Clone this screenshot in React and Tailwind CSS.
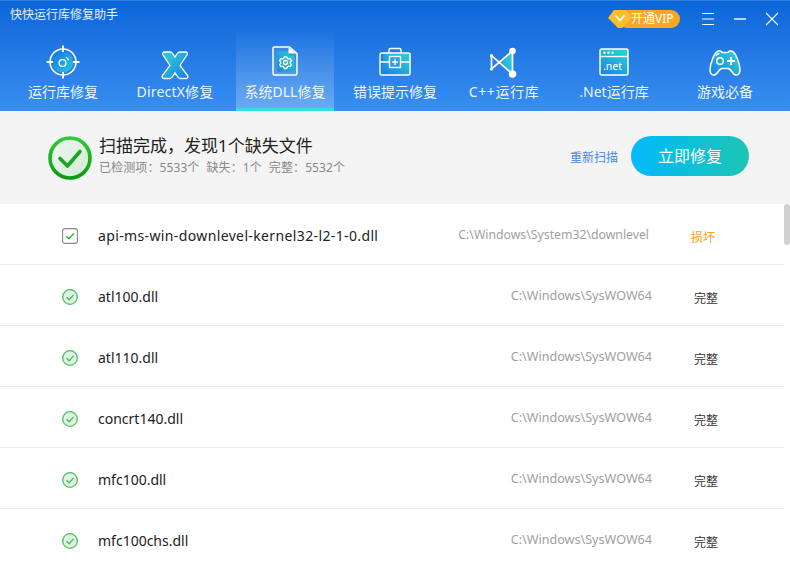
import React from "react";

const Grad = ({ id, from = "#2fd6d0", to = "#1a86e8", x1 = 0.8, y1 = 0, x2 = 0.2, y2 = 1 }) => (
  <linearGradient id={id} x1={x1} y1={y1} x2={x2} y2={y2}>
    <stop offset="0" stopColor={from} />
    <stop offset="1" stopColor={to} />
  </linearGradient>
);

const Target = () => (
  <svg width="36" height="36" viewBox="0 0 36 36" fill="none">
    <defs><Grad id="g1" from="#27cbd8" to="#1676e6" x1={1} y1={1} x2={0} y2={0} /></defs>
    <circle cx="18" cy="18" r="10.5" fill="url(#g1)" />
    <circle cx="18" cy="18" r="13" stroke="#fff" strokeWidth="1.6" />
    <path d="M18 1.5V8M18 28V34.5M1.5 18H8M28 18H34.5" stroke="#fff" strokeWidth="1.8" />
    <circle cx="17.5" cy="19" r="3.4" stroke="#fff" strokeWidth="1.3" />
    <path d="M21.5 13.5a5.5 5.5 0 0 1 2 2.4" stroke="#fff" strokeWidth="1.3" strokeLinecap="round" />
  </svg>
);

const XIcon = () => (
  <svg width="32" height="32" viewBox="0 0 32 32" fill="none">
    <defs><Grad id="g2" from="#2fd6d0" to="#1a7ee6" x1={0} y1={0} x2={1} y2={1} /></defs>
    <path d="M5.5 3h5.5c1.2 0 2 .5 2.7 1.5L16 8l2.3-3.5C19 3.500 19.800 3 21 3h5.500c1.800 0 2.500 1.700 1.500 3L21 16.500 28.500 26.500c1 1.400.2 3-1.500 3h-5.500c-1.200 0-2-.5-2.700-1.500L16 24l-2.800 4c-.7 1-1.500 1.500-2.700 1.500H5c-1.700 0-2.500-1.600-1.500-3L11 16.500 4 6c-1-1.300-.3-3 1.500-3z" fill="url(#g2)" stroke="#fff" strokeWidth="1.3" />
  </svg>
);

const FileIcon = () => (
  <svg width="28" height="30" viewBox="0 0 28 30" fill="none">
    <defs><Grad id="g3" from="#2bd3cd" to="#1a86e8" x1={1} y1={0} x2={0} y2={1} /></defs>
    <path d="M3.500 1H18.500L26 7.500V27.500A1.500 1.500 0 0 1 24.500 29H3.500A1.500 1.500 0 0 1 2 27.500V2.500A1.500 1.500 0 0 1 3.500 1Z" fill="#ffffff" fillOpacity="0.06" stroke="#fff" strokeWidth="1.5" strokeLinejoin="round" />
    <path d="M6 5.500H18V9.500H23V25.500H6Z" fill="url(#g3)" />
    <path d="M17.500 1.500V7.500H25.500" fill="#fff" />
    <g stroke="#fff" strokeWidth="1.3" fill="none">
      <circle cx="14.500" cy="16.500" r="2" />
      <path d="M13.200 10.800h2.600l.4 1.700 1.400.7 1.600-.6 1.300 2.200-1.300 1.100v1.500l1.300 1.100-1.300 2.200-1.600-.6-1.400.7-.4 1.700h-2.600l-.4-1.700-1.400-.7-1.600.6-1.300-2.200 1.300-1.100v-1.500l-1.300-1.100 1.300-2.200 1.600.6 1.400-.7z" strokeLinejoin="round" />
    </g>
  </svg>
);

const CaseIcon = () => (
  <svg width="34" height="30" viewBox="0 0 34 30" fill="none">
    <defs><Grad id="g4" from="#2fd6d0" to="#1a7ee6" x1={1} y1={0} x2={0} y2={1} /></defs>
    <path d="M11 6V3a1.500 1.500 0 0 1 1.500-1.500h9A1.500 1.500 0 0 1 23 3V6" stroke="#fff" strokeWidth="1.4" />
    <rect x="5" y="6" width="28" height="21" fill="url(#g4)" />
    <rect x="2" y="6" width="30" height="22" rx="2" stroke="#fff" strokeWidth="1.4" />
    <path d="M2 15H11M23 15H32" stroke="#fff" strokeWidth="1.3" />
    <rect x="11.500" y="9.500" width="11" height="11" fill="#2a9fe2" stroke="#fff" strokeWidth="1.4" />
    <path d="M17 12V18M14 15H20" stroke="#fff" strokeWidth="1.4" />
  </svg>
);

const VsIcon = () => (
  <svg width="30" height="36" viewBox="0 0 30 36" fill="none">
    <defs><Grad id="g5" from="#2ad6d2" to="#2aa4e0" x1={1} y1={0} x2={0} y2={1} /></defs>
    <path d="M12.500 18.500L23.500 7V30Z" fill="url(#g5)" />
    <path d="M2.500 11.700L23.500 30M23.500 7L2.500 25M2.500 11.700V25M23.500 7V30" stroke="#fff" strokeWidth="1.7" />
    <circle cx="23.500" cy="7" r="3.300" fill="#fff" />
    <circle cx="23.500" cy="30" r="3.800" fill="#fff" />
    <circle cx="2.500" cy="11.700" r="1.600" fill="#fff" />
    <circle cx="2.500" cy="25" r="1.600" fill="#fff" />
  </svg>
);

const NetIcon = () => (
  <svg width="32" height="30" viewBox="0 0 32 30" fill="none">
    <defs><Grad id="g6" from="#2ad2d0" to="#1a86e8" x1={0.8} y1={0} x2={0.2} y2={1} /></defs>
    <rect x="2" y="2" width="28" height="26" rx="2" fill="url(#g6)" stroke="#fff" strokeWidth="1.5" />
    <path d="M2 9.500H30" stroke="#fff" strokeWidth="1.400" />
    <circle cx="6.500" cy="5.800" r="1.200" fill="#fff" />
    <circle cx="10.500" cy="5.800" r="1.200" fill="#fff" />
    <circle cx="14.500" cy="5.800" r="1.200" fill="#fff" />
    <text x="5" y="23" fill="#fff" fontSize="10.500" fontFamily="'Noto Sans', sans-serif">.net</text>
  </svg>
);

const GameIcon = () => (
  <svg width="34" height="28" viewBox="0 0 34 28" fill="none">
    <defs><Grad id="g7" from="#2fd6d0" to="#1a7ee6" x1={1} y1={0} x2={0} y2={1} /></defs>
    <path d="M9.500 2.500C11 1.500 13 2 14 3.500H20C21 2 23 1.500 24.500 2.500C28 4.500 32 15 32 21C32 25.500 29 27 26.500 25.500C24 24 23 20.500 20.500 19.500H13.500C11 20.500 10 24 7.500 25.500C5 27 2 25.500 2 21C2 15 6 4.500 9.500 2.500Z" fill="url(#g7)" stroke="#fff" strokeWidth="1.500" strokeLinejoin="round" />
    <circle cx="12" cy="12" r="3.300" stroke="#fff" strokeWidth="1.500" />
    <path d="M8 6.500a7 7 0 0 1 3-1.800" stroke="#fff" strokeWidth="1.200" strokeLinecap="round" />
    <path d="M23 8V16M19 12H27" stroke="#fff" strokeWidth="2" />
  </svg>
);

const tabs = [
  { label: "运行库修复", Icon: Target, pt: "pt-[17px]", track: "" },
  { label: "DirectX修复", Icon: XIcon, pt: "pt-[22px]", track: "tracking-[0.2px]" },
  { label: "系统DLL修复", Icon: FileIcon, pt: "pt-[19px]", active: true, track: "" },
  { label: "错误提示修复", Icon: CaseIcon, pt: "pt-[20px]", track: "" },
  { label: "C++运行库", Icon: VsIcon, pt: "pt-[17px]", track: "tracking-[0.6px]" },
  { label: ".Net运行库", Icon: NetIcon, pt: "pt-[20px]", track: "" },
  { label: "游戏必备", Icon: GameIcon, pt: "pt-[22px]", track: "" },
];

const rows = [
  { name: "api-ms-win-downlevel-kernel32-l2-1-0.dll", path: "C:\\Windows\\System32\\downlevel", status: "损坏", damaged: true },
  { name: "atl100.dll", path: "C:\\Windows\\SysWOW64", status: "完整" },
  { name: "atl110.dll", path: "C:\\Windows\\SysWOW64", status: "完整" },
  { name: "concrt140.dll", path: "C:\\Windows\\SysWOW64", status: "完整" },
  { name: "mfc100.dll", path: "C:\\Windows\\SysWOW64", status: "完整" },
  { name: "mfc100chs.dll", path: "C:\\Windows\\SysWOW64", status: "完整" },
];

const Tab = ({ label, Icon, pt, active, track }) => (
  <div
    className={
      "relative w-[98px] h-[84px] flex flex-col items-center " +
      (active ? "bg-gradient-to-b from-white/0 to-white/25 border-b-[3px] border-[#35e0dc]" : "")
    }
  >
    <div className="h-[57px] flex justify-center items-center">
      <div className={"h-[57px] " + pt}>
        <Icon />
      </div>
    </div>
    <div className={"absolute top-[56px] left-[-10px] right-[-10px] text-center text-[14px] leading-[18px] text-white/95 whitespace-nowrap " + track}>
      {label}
    </div>
  </div>
);

const StatusIcon = ({ damaged }) =>
  damaged ? (
    <svg width="16" height="16" viewBox="0 0 16 16" fill="none">
      <rect x="0.600" y="0.600" width="14.800" height="14.800" rx="2.500" fill="#fff" stroke="#8a8a8a" strokeWidth="1.100" />
      <path d="M4.300 8.200L7 10.800L11.800 5.500" stroke="#2cb32c" strokeWidth="1.300" />
    </svg>
  ) : (
    <svg width="16" height="16" viewBox="0 0 16 16" fill="none">
      <circle cx="8" cy="8" r="7.300" fill="#e0f3e2" stroke="#4cc05a" strokeWidth="1.300" />
      <path d="M4.600 8.200L7.200 10.800L11.500 5.800" stroke="#4cb45a" strokeWidth="1.300" />
    </svg>
  );

export default function App() {
  return (
    <div className="w-[790px] h-[562px] overflow-hidden bg-white flex flex-col font-['Noto_Sans','Noto_Sans_CJK_SC',sans-serif]">
      <header className="h-[111px] shrink-0 bg-gradient-to-b from-[#0a66d9] to-[#398ef0] border-t border-[#2e7fe0] flex flex-col">
        <div className="h-[26px] flex items-center pl-[10px] pr-[12px] relative">
          <div className="text-[12px] text-white/90 mt-[1px] tracking-normal">快快运行库修复助手</div>
          <div className="ml-auto flex items-center">
            <div className="relative h-[18px] w-[73px] mt-[10px] mr-[22px]">
              <div className="absolute left-[11px] right-0 top-0 h-[18px] rounded-full bg-[#f9a825] flex items-center pl-[13px] text-[12px] text-white">
                开通VIP
              </div>
              <svg className="absolute left-0 top-[-1px]" width="26" height="20" viewBox="0 0 26 20" fill="none">
                <path d="M7 1H19L25 9L15 19H11L1 9Z" fill="#fbbf2c" />
                <path d="M8.500 6.500L13 11.500L17.500 6.500" stroke="#fff" strokeWidth="1.700" />
              </svg>
            </div>
            <svg className="mt-[10px] mr-[20px]" width="12" height="14" viewBox="0 0 12 14" fill="none">
              <path d="M0 1.500H12M0 7H12M0 12.500H12" stroke="#fff" strokeWidth="1.200" />
            </svg>
            <svg className="mt-[10px] mr-[20px]" width="12" height="14" viewBox="0 0 12 14" fill="none">
              <path d="M0 7H12" stroke="#fff" strokeWidth="1.400" />
            </svg>
            <svg className="mt-[10px]" width="12" height="14" viewBox="0 0 12 14" fill="none">
              <path d="M0 1L12 13M12 1L0 13" stroke="#fff" strokeWidth="1.200" />
            </svg>
          </div>
        </div>
        <nav className="pl-[14px] grid grid-cols-[112px_110px_110px_109px_110px_111px_98px]">
          {tabs.map((t) => (
            <Tab key={t.label} {...t} />
          ))}
        </nav>
      </header>

      <section className="h-[93px] shrink-0 bg-[#f4f4f4] flex items-center pl-[48px] pr-[41px]">
        <svg width="44" height="44" viewBox="0 0 44 44" fill="none">
          <defs>
            <linearGradient id="ring" x1="0" y1="0" x2="0" y2="1">
              <stop offset="0" stopColor="#2ecb35" />
              <stop offset="1" stopColor="#0c9a14" />
            </linearGradient>
            <linearGradient id="disc" x1="0" y1="0" x2="1" y2="1">
              <stop offset="0" stopColor="#f2f6f2" />
              <stop offset="1" stopColor="#d2ead4" />
            </linearGradient>
          </defs>
          <circle cx="22" cy="22" r="20" fill="url(#disc)" stroke="url(#ring)" strokeWidth="3.600" />
          <path d="M12 22.500L19.500 30L32 15.500" stroke="#18a522" strokeWidth="3.600" strokeLinecap="round" strokeLinejoin="round" />
        </svg>
        <div className="ml-[7px] mt-[-3px]">
          <div className="text-[17px] leading-[24px] text-[#222]">扫描完成，发现1个缺失文件</div>
          <div className="text-[12px] leading-[20px] text-[#888] flex gap-[7px] tracking-[0.1px]">
            <span>已检测项：5533个</span>
            <span>缺失：1个</span>
            <span>完整：5532个</span>
          </div>
        </div>
        <div className="ml-auto text-[12px] text-[#3d8be8] mr-[13px]">重新扫描</div>
        <button className="w-[118px] h-[40px] mt-[-4px] rounded-full bg-gradient-to-r from-[#05b9fb] to-[#1fc4b4] text-white text-[16px]">
          立即修复
        </button>
      </section>

      <main className="flex-1 flex min-h-0">
        <div className="w-[784px]">
          {rows.map((r) => (
            <div key={r.name} className="h-[61px] flex items-center pl-[62px] pt-[3px] border-b border-[#ececec]">
              <StatusIcon damaged={r.damaged} />
              <div className={"ml-[20px] text-[14px] text-[#222] flex-1 whitespace-nowrap " + (r.damaged ? "tracking-[0.37px]" : "")}>
                {r.name}
              </div>
              <div className={"text-[#a0a0a0] whitespace-nowrap mt-[-1px] " + (r.damaged ? "text-[12.25px] mr-[42px]" : "text-[12.6px] mr-[39px]")}>
                {r.path}
              </div>
              <div className={"text-[12px] w-[93px] mt-[4px] " + (r.damaged ? "text-[#f5a01e]" : "text-[#333] pl-[3px]")}>
                {r.status}
              </div>
            </div>
          ))}
        </div>
        <div className="w-[6px]">
          <div className="h-[41px] w-[6px] rounded-full bg-[#d2d2d2]" />
        </div>
      </main>
    </div>
  );
}
